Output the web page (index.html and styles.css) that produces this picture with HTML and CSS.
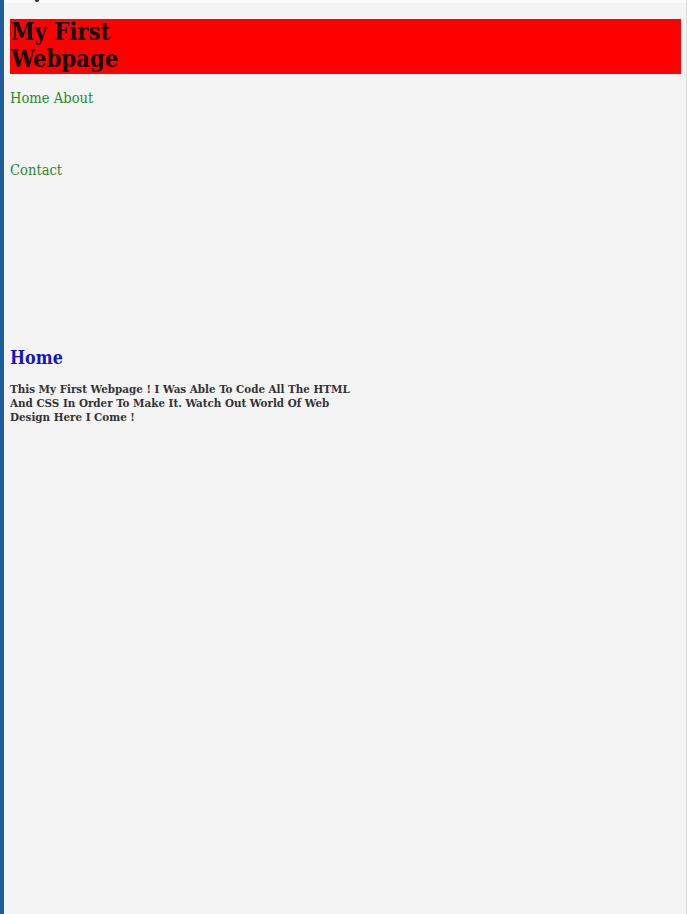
FILE: index.html
```html
<!DOCTYPE html>
<html lang="en">
<head>
<meta charset="utf-8">
<title>My First Webpage</title>
<link rel="stylesheet" href="styles.css">
</head>
<body>
<div class="frame">
  <div class="topstrip"><span class="dot"></span></div>
  <div class="page">
    <header class="banner">
      <h1 class="title">My First Webpage</h1>
    </header>
    <nav class="nav">
      <div class="nav-row"><a class="nav-link" href="#">Home</a> <a class="nav-link" href="#">About</a></div>
      <div class="nav-row"><a class="nav-link" href="#">Contact</a></div>
    </nav>
    <main class="content">
      <h2 class="heading">Home</h2>
      <p class="intro">This My First Webpage ! I Was Able To Code All The HTML And CSS In Order To Make It. Watch Out World Of Web Design Here I Come !</p>
    </main>
  </div>
</div>
</body>
</html>
```

FILE: styles.css
```css
html, body {
  margin: 0;
  padding: 0;
  height: 100%;
}
body {
  background: #f4f4f4;
  font-family: "DejaVu Serif", "Liberation Serif", serif;
  font-stretch: condensed;
}
.frame {
  min-height: 914px;
  border-left: 4px solid #1f5c99;
  border-right: 1px solid #dcdcdc;
  background: #f4f4f4;
  box-sizing: border-box;
}
.topstrip {
  height: 3px;
  background: #fbfbfb;
  position: relative;
}
.dot {
  position: absolute;
  left: 31px;
  top: 0;
  width: 4px;
  height: 2px;
  background: #222;
  border-radius: 0 0 2px 2px;
}
.page {
  padding: 16px 5px 0 6px;
}
.banner {
  background: #ff0000;
  height: 55px;
  padding: 0 1px;
  box-sizing: border-box;
}
.title {
  margin: 0;
  width: 120px;
  font-size: 23.6px;
  line-height: 27px;
  font-weight: bold;
  color: #111;
}
.nav {
  padding-top: 14px;
}
.nav-row {
  height: 20px;
  font-size: 14.6px;
  line-height: 20px;
}
.nav-row + .nav-row {
  margin-top: 52px;
}
.nav-link {
  color: #2a8a2a;
  text-decoration: none;
}
.content {
  padding-top: 166px;
}
.heading {
  margin: 0;
  font-size: 17.8px;
  line-height: 24px;
  color: #1515c8;
}
.intro {
  margin: 12px 0 0;
  width: 350px;
  font-size: 11.5px;
  line-height: 14px;
  font-weight: bold;
  color: #333;
}
```
